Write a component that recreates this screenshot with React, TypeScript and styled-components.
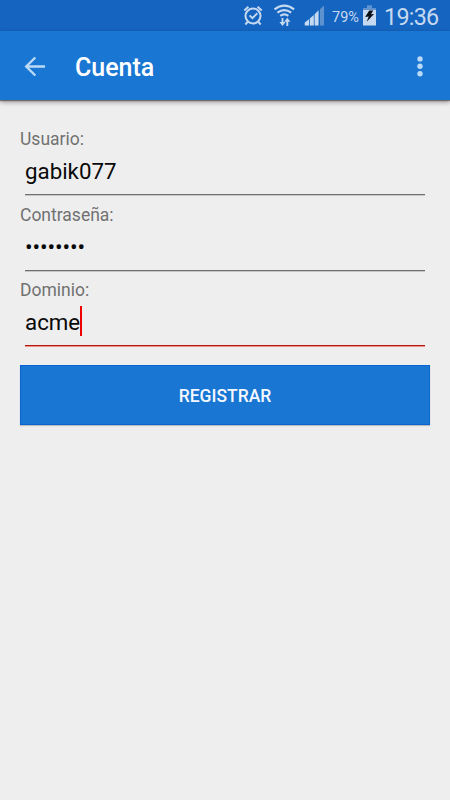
import React from "react";
import styled, { createGlobalStyle } from "styled-components";

const GlobalStyle = createGlobalStyle`
  * { box-sizing: border-box; }
  body {
    margin: 0;
    background: #eeeeee;
    font-family: Roboto, "Noto Sans", sans-serif;
  }
`;

const Screen = styled.div`
  width: 450px;
  height: 800px;
  display: flex;
  flex-direction: column;
  background: #eeeeee;
  overflow: hidden;
`;

const StatusBar = styled.div`
  height: 31px;
  flex: none;
  display: flex;
  align-items: center;
  justify-content: flex-end;
  padding-right: 12px;
  background: #1565c0;
  color: #c5d9f0;
`;

const StatusIcons = styled.svg`
  display: block;
  flex: none;
`;

const BatteryText = styled.span`
  width: 31px;
  margin-left: 6px;
  font-size: 14.5px;
  line-height: 31px;
  padding-top: 3px;
  white-space: nowrap;
`;

const Clock = styled.span`
  width: 54px;
  margin-left: 8px;
  font-size: 23.3px;
  font-weight: 400;
  line-height: 31px;
  padding-top: 3px;
  letter-spacing: -0.7px;
  white-space: nowrap;
`;

const Toolbar = styled.header`
  height: 69px;
  flex: none;
  display: flex;
  align-items: center;
  padding: 2px 20px 0 23px;
  background: #1976d2;
  box-shadow: 0 1px 1px rgba(50, 45, 30, 0.5), 0 2px 5px rgba(0, 0, 0, 0.4);
`;

const IconButton = styled.button`
  display: flex;
  padding: 0;
  border: 0;
  background: none;
  color: #badaf8;
`;

const Title = styled.h1`
  flex: 1;
  margin: 0 0 0 28px;
  padding-top: 2px;
  font-size: 25px;
  font-weight: 500;
  line-height: 30px;
  color: #ffffff;
`;

const Form = styled.form`
  display: flex;
  flex-direction: column;
  padding: 29px 20px 0;
`;

const Field = styled.div`
  height: 75.5px;
  display: flex;
  flex-direction: column;
`;

const Label = styled.span`
  font-size: 17.5px;
  line-height: 20px;
  color: #717171;
`;

const Value = styled.div<{ $active?: boolean; $masked?: boolean }>`
  height: ${(p) => (p.$active ? "47px" : "46px")};
  margin: 0 5px;
  display: flex;
  align-items: flex-start;
  padding-top: 7px;
  font-size: ${(p) => (p.$masked ? "22.5px" : "22.3px")};
  line-height: 30px;
  letter-spacing: ${(p) => (p.$masked ? "-0.1px" : "0")};
  color: #090909;
  border-bottom: 1px solid ${(p) => (p.$active ? "#b51a12" : "#707070")};
  box-shadow: 0 1px 0 ${(p) => (p.$active ? "#ec8f86" : "#c6c6c6")};
  ${(p) => p.$active && "height: 46px;"}
`;

const Caret = styled.span`
  width: 2px;
  height: 30px;
  margin: -1px 0 0 -0.5px;
  background: #f00000;
`;

const SubmitButton = styled.button`
  height: 60px;
  margin-top: 9.5px;
  padding: 1px 0 0;
  border: 1px solid #0864d0;
  background: #1976d2;
  box-shadow: 0 1px 1px rgba(0, 0, 0, 0.2);
  color: #f4f8ff;
  font-family: inherit;
  font-size: 17.5px;
  font-weight: 500;
`;

function StatusGlyphs() {
  return (
    <StatusIcons width="84" height="31" viewBox="0 0 84 31" fill="none" stroke="currentColor">
      <circle cx="11" cy="16" r="7.5" strokeWidth="2" />
      <path d="M2.3 10.5 6.4 6.8M15.6 6.8l4.1 3.7M5.8 21.7l-2.4 2.8M16.2 21.7l2.4 2.8" strokeWidth="2" />
      <path d="m7.6 15.3 2.8 2.8 4.9-4.8" strokeWidth="1.9" />
      <path d="M32.5 9.3q9.8-7.4 19.6 0M35.4 12.7q6.9-5.3 13.8 0M38.3 15.8q4-3 8 0" strokeWidth="2.1" />
      <path d="M40.5 18v6M45.3 20v6" strokeWidth="1.9" />
      <path d="M37.4 22h6.2l-3.1 4ZM42.2 21.8h6.2l-3.1-4Z" fill="currentColor" stroke="none" />
      <path d="M62.7 25.5v-3l4.3-3.2v6.2ZM67.8 25.5v-7l4-3.5v10.5ZM72.6 25.5V14.2l4-3.9v15.2Z" fill="currentColor" stroke="none" />
      <path d="M78 25.5V9.3l4-3.8v20Z" fill="#5e93d0" stroke="none" />
    </StatusIcons>
  );
}

function Battery() {
  return (
    <StatusIcons width="13" height="31" viewBox="0 0 13 31">
      <path d="M4 5.3h5V8h4v2H0V8h4Z" fill="#5e93d0" />
      <path d="M0 10h13v15.5H0Z" fill="#c5d9f0" />
      <path d="M6.2 10.5h4L8 14.2l3-.2-7.3 7.8 2-5.2-3.5.3Z" fill="#090d16" />
    </StatusIcons>
  );
}

export default function App() {
  return (
    <>
      <GlobalStyle />
      <Screen>
        <StatusBar>
          <StatusGlyphs />
          <BatteryText>79%</BatteryText>
          <Battery />
          <Clock>19:36</Clock>
        </StatusBar>
        <Toolbar>
          <IconButton type="button" aria-label="Atrás">
            <svg width="24" height="24" viewBox="0 0 24 24" fill="none" stroke="currentColor" strokeWidth="2.4">
              <path d="M22 11.5H3.5M12.3 2.5 3.2 11.5l9.1 9" />
            </svg>
          </IconButton>
          <Title>Cuenta</Title>
          <IconButton type="button" aria-label="Más opciones">
            <svg width="20" height="24" viewBox="0 0 20 24" fill="currentColor">
              <circle cx="10" cy="3.9" r="2.7" />
              <circle cx="10" cy="11.3" r="2.7" />
              <circle cx="10" cy="18.8" r="2.7" />
            </svg>
          </IconButton>
        </Toolbar>
        <Form>
          <Field>
            <Label>Usuario:</Label>
            <Value>gabik077</Value>
          </Field>
          <Field>
            <Label>Contraseña:</Label>
            <Value $masked>••••••••</Value>
          </Field>
          <Field>
            <Label>Dominio:</Label>
            <Value $active>
              acme
              <Caret />
            </Value>
          </Field>
          <SubmitButton type="button">REGISTRAR</SubmitButton>
        </Form>
      </Screen>
    </>
  );
}
